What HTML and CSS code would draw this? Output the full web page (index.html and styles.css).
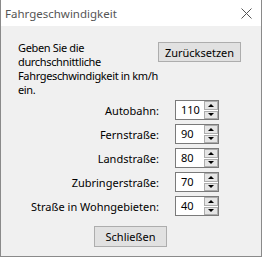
FILE: index.html
```html
<!DOCTYPE html>
<html lang="de">
<head>
  <meta charset="UTF-8">
  <title>Fahrgeschwindigkeit</title>
  <link rel="stylesheet" href="styles.css">
</head>
<body>
  <div class="fenster">
    <div class="titel">
      <span>Fahrgeschwindigkeit</span>
      <svg class="schliessen-x" width="11" height="11" viewBox="0 0 11 11">
        <path d="M0.5 0.5 L10.5 10.5 M10.5 0.5 L0.5 10.5" stroke="#555" stroke-width="1" fill="none"/>
      </svg>
    </div>
    <div class="inhalt">
      <div class="kopf">
        <p class="hinweis">Geben Sie die<br>durchschnittliche<br>Fahrgeschwindigkeit in km/h<br>ein.</p>
        <button class="knopf zuruck">Zurücksetzen</button>
      </div>

      <div class="zeilen">
        <label>Autobahn:</label>
        <div class="zahl"><span class="wert">110</span><div class="pfeile"><i class="hoch"></i><i class="runter"></i></div></div>
        <label>Fernstraße:</label>
        <div class="zahl"><span class="wert">90</span><div class="pfeile"><i class="hoch"></i><i class="runter"></i></div></div>
        <label>Landstraße:</label>
        <div class="zahl"><span class="wert">80</span><div class="pfeile"><i class="hoch"></i><i class="runter"></i></div></div>
        <label>Zubringerstraße:</label>
        <div class="zahl"><span class="wert">70</span><div class="pfeile"><i class="hoch"></i><i class="runter"></i></div></div>
        <label>Straße in Wohngebieten:</label>
        <div class="zahl"><span class="wert">40</span><div class="pfeile"><i class="hoch"></i><i class="runter"></i></div></div>
      </div>

      <div class="fuss">
        <button class="knopf schliessen">Schließen</button>
      </div>
    </div>
  </div>
</body>
</html>
```

FILE: styles.css
```css
body {
  margin: 0;
  background: #fff;
  font-family: "Noto Sans", sans-serif;
  font-size: 11px;
  color: #000;
}
.fenster {
  width: 262px;
  height: 257px;
  box-sizing: border-box;
  border: 1px solid #8a8a8a;
  border-top: none;
  display: flex;
  flex-direction: column;
}
.titel {
  height: 26px;
  background: #fff;
  display: flex;
  align-items: center;
  justify-content: space-between;
  padding: 0 9px 0 4px;
  color: #555;
  font-size: 11.5px;
}
.inhalt {
  flex: 1;
  background: #f0f0f0;
  padding: 15px 20px 0 17px;
  display: flex;
  flex-direction: column;
}
.kopf {
  display: flex;
  justify-content: space-between;
  align-items: flex-start;
}
.hinweis {
  margin: 0;
  white-space: nowrap;
  line-height: 14px;
  letter-spacing: -0.35px;
}
.knopf {
  font-family: inherit;
  font-size: 11px;
  background: #e1e1e1;
  border: 1px solid #adadad;
  padding: 0;
  color: #000;
  flex-shrink: 0;
}
.zuruck {
  width: 83px;
  height: 20px;
  margin-top: 1px;
}
.zeilen {
  display: grid;
  grid-template-columns: 141px auto;
  column-gap: 16px;
  row-gap: 4px;
  margin-top: 3px;
  align-items: center;
}
.zeilen label {
  text-align: right;
}
.zahl {
  width: 44px;
  height: 20px;
  box-sizing: border-box;
  border: 1px solid #7a7a7a;
  background: #fff;
  display: flex;
}
.wert {
  flex: 1;
  padding-left: 5px;
  line-height: 18px;
}
.pfeile {
  width: 14px;
  display: flex;
  flex-direction: column;
  gap: 1px;
  padding: 0 0 0 1px;
}
.pfeile i {
  flex: 1;
  box-sizing: border-box;
  border: 1px solid #adadad;
  background: #e5e5e5;
  display: flex;
  align-items: center;
  justify-content: center;
}
.pfeile i::before {
  content: "";
  border-left: 3px solid transparent;
  border-right: 3px solid transparent;
}
.hoch::before {
  border-bottom: 3px solid #000;
}
.runter::before {
  border-top: 3px solid #000;
}
.fuss {
  display: flex;
  justify-content: center;
  margin-top: 10px;
  padding-left: 2px;
}
.schliessen {
  width: 73px;
  height: 21px;
}
```
